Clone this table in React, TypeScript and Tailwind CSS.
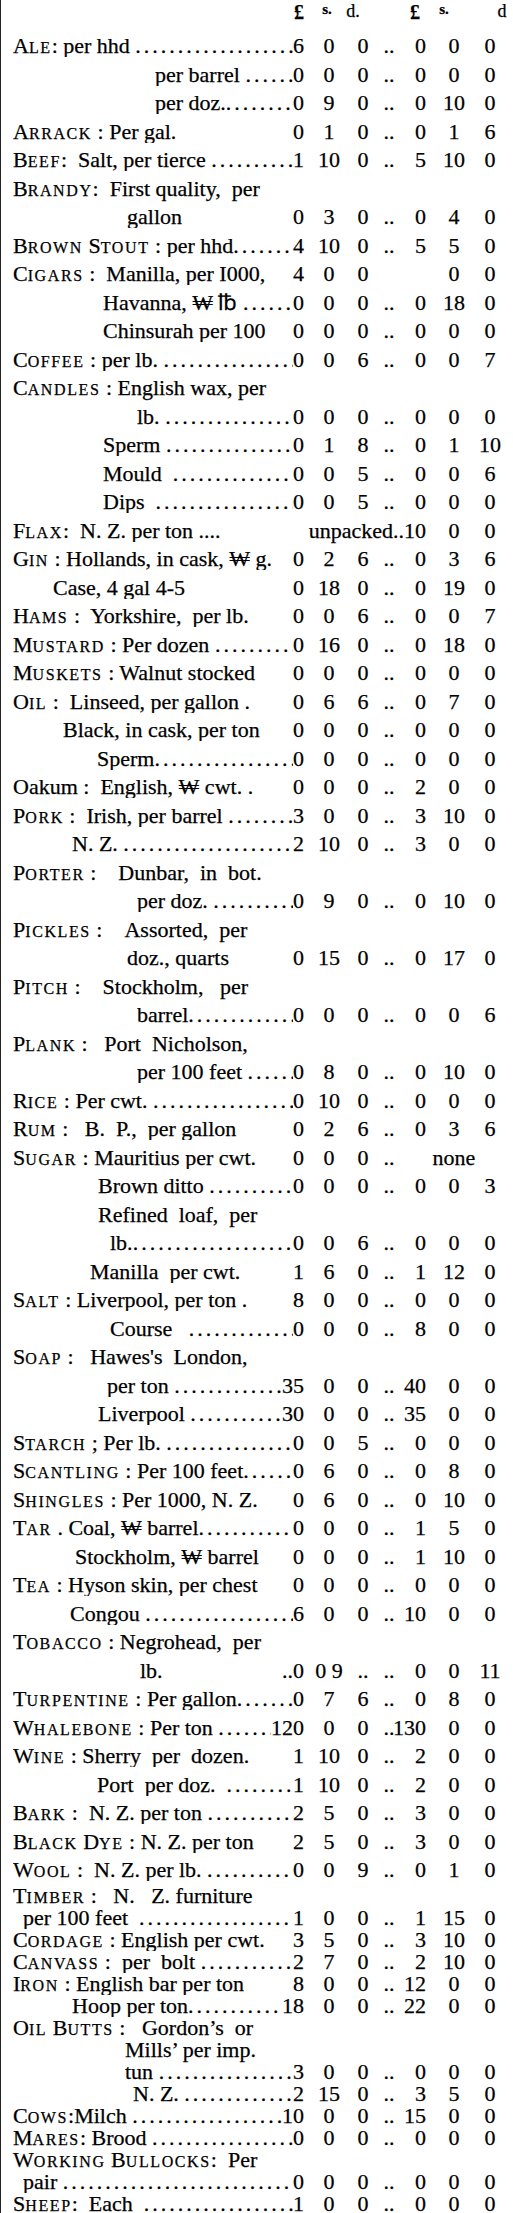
import React from "react";

type V = [string, string, string, string, string, string];
type R = {
  h?: string;
  sep?: string;
  t?: string;
  pl?: string;
  lead?: boolean;
  v?: V;
  wide?: string;
  wv?: [string, string];
};

const Z: V = ["0", "0", "0", "0", "0", "0"];
const DOTS = ".".repeat(70);

const rows: R[] = [
  { h: "Ale", sep: ": ", t: "per hhd ", lead: true, v: ["6", "0", "0", "0", "0", "0"] },
  { t: "per barrel ", pl: "pl-[154px]", lead: true, v: Z },
  { t: "per doz.", pl: "pl-[154px]", lead: true, v: ["0", "9", "0", "0", "10", "0"] },
  { h: "Arrack", sep: " : ", t: "Per gal.", v: ["0", "1", "0", "0", "1", "6"] },
  { h: "Beef", sep: ":  ", t: "Salt, per tierce ", lead: true, v: ["1", "10", "0", "5", "10", "0"] },
  { h: "Brandy", sep: ":  ", t: "First quality,  per" },
  { t: "gallon", pl: "pl-[126px]", v: ["0", "3", "0", "0", "4", "0"] },
  { h: "Brown Stout", sep: " : ", t: "per hhd", lead: true, v: ["4", "10", "0", "5", "5", "0"] },
  { h: "Cigars", sep: " :  ", t: "Manilla, per I000,", v: ["4", "0", "0", "", "0", "0"] },
  { t: "Havanna, ₩ ℔ ", pl: "pl-[102px]", lead: true, v: ["0", "0", "0", "0", "18", "0"] },
  { t: "Chinsurah per 100", pl: "pl-[102px]", v: Z },
  { h: "Coffee", sep: " : ", t: "per lb. ", lead: true, v: ["0", "0", "6", "0", "0", "7"] },
  { h: "Candles", sep: " : ", t: "English wax, per" },
  { t: "lb. ", pl: "pl-[136px]", lead: true, v: Z },
  { t: "Sperm ", pl: "pl-[102px]", lead: true, v: ["0", "1", "8", "0", "1", "10"] },
  { t: "Mould  ", pl: "pl-[102px]", lead: true, v: ["0", "0", "5", "0", "0", "6"] },
  { t: "Dips  ", pl: "pl-[102px]", lead: true, v: ["0", "0", "5", "0", "0", "0"] },
  { h: "Flax", sep: ":  ", t: "N. Z. per ton .... ", wide: "unpacked..10", wv: ["0", "0"] },
  { h: "Gin", sep: " : ", t: "Hollands, in cask, ₩ g.", v: ["0", "2", "6", "0", "3", "6"] },
  { t: "Case, 4 gal 4-5", pl: "pl-[52px]", v: ["0", "18", "0", "0", "19", "0"] },
  { h: "Hams", sep: " :  ", t: "Yorkshire,  per lb.", v: ["0", "0", "6", "0", "0", "7"] },
  { h: "Mustard", sep: " : ", t: "Per dozen ", lead: true, v: ["0", "16", "0", "0", "18", "0"] },
  { h: "Muskets", sep: " : ", t: "Walnut stocked", v: Z },
  { h: "Oil", sep: " :  ", t: "Linseed, per gallon .", v: ["0", "6", "6", "0", "7", "0"] },
  { t: "Black, in cask, per ton", pl: "pl-[62px]", v: Z },
  { t: "Sperm", pl: "pl-[96px]", lead: true, v: Z },
  { t: "Oakum :  English, ₩ cwt. .", v: ["0", "0", "0", "2", "0", "0"] },
  { h: "Pork", sep: " :  ", t: "Irish, per barrel ", lead: true, v: ["3", "0", "0", "3", "10", "0"] },
  { t: "N. Z. ", pl: "pl-[71px]", lead: true, v: ["2", "10", "0", "3", "0", "0"] },
  { h: "Porter", sep: " :    ", t: "Dunbar,  in  bot." },
  { t: "per doz. ", pl: "pl-[136px]", lead: true, v: ["0", "9", "0", "0", "10", "0"] },
  { h: "Pickles", sep: " :    ", t: "Assorted,  per" },
  { t: "doz., quarts", pl: "pl-[126px]", v: ["0", "15", "0", "0", "17", "0"] },
  { h: "Pitch", sep: " :    ", t: "Stockholm,   per" },
  { t: "barrel", pl: "pl-[136px]", lead: true, v: ["0", "0", "0", "0", "0", "6"] },
  { h: "Plank", sep: " :   ", t: "Port  Nicholson," },
  { t: "per 100 feet ", pl: "pl-[136px]", lead: true, v: ["0", "8", "0", "0", "10", "0"] },
  { h: "Rice", sep: " : ", t: "Per cwt. ", lead: true, v: ["0", "10", "0", "0", "0", "0"] },
  { h: "Rum", sep: " :   ", t: "B.  P.,  per gallon", v: ["0", "2", "6", "0", "3", "6"] },
  { h: "Sugar", sep: " : ", t: "Mauritius per cwt.", v: ["0", "0", "0", "", "none", ""] },
  { t: "Brown ditto ", pl: "pl-[97px]", lead: true, v: ["0", "0", "0", "0", "0", "3"] },
  { t: "Refined  loaf,  per", pl: "pl-[97px]" },
  { t: "lb.", pl: "pl-[109px]", lead: true, v: ["0", "0", "6", "0", "0", "0"] },
  { t: "Manilla  per cwt.", pl: "pl-[89px]", v: ["1", "6", "0", "1", "12", "0"] },
  { h: "Salt", sep: " : ", t: "Liverpool, per ton .", v: ["8", "0", "0", "0", "0", "0"] },
  { t: "Course   ", pl: "pl-[109px]", lead: true, v: ["0", "0", "0", "8", "0", "0"] },
  { h: "Soap", sep: " :   ", t: "Hawes's  London," },
  { t: "per ton ", pl: "pl-[106px]", lead: true, v: ["35", "0", "0", "40", "0", "0"] },
  { t: "Liverpool ", pl: "pl-[97px]", lead: true, v: ["30", "0", "0", "35", "0", "0"] },
  { h: "Starch", sep: " ; ", t: "Per lb. ", lead: true, v: ["0", "0", "5", "0", "0", "0"] },
  { h: "Scantling", sep: " : ", t: "Per 100 feet", lead: true, v: ["0", "6", "0", "0", "8", "0"] },
  { h: "Shingles", sep: " : ", t: "Per 1000, N. Z.", v: ["0", "6", "0", "0", "10", "0"] },
  { h: "Tar", sep: " . ", t: "Coal, ₩ barrel", lead: true, v: ["0", "0", "0", "1", "5", "0"] },
  { t: "Stockholm, ₩ barrel", pl: "pl-[74px]", v: ["0", "0", "0", "1", "10", "0"] },
  { h: "Tea", sep: " : ", t: "Hyson skin, per chest", v: Z },
  { t: "Congou ", pl: "pl-[69px]", lead: true, v: ["6", "0", "0", "10", "0", "0"] },
  { h: "Tobacco", sep: " : ", t: "Negrohead,  per" },
  { t: "lb.", pl: "pl-[139px]", v: ["..0", "0 9", "..", "0", "0", "11"] },
  { h: "Turpentine", sep: " : ", t: "Per gallon", lead: true, v: ["0", "7", "6", "0", "8", "0"] },
  { h: "Whalebone", sep: " : ", t: "Per ton ", lead: true, v: ["120", "0", "0", "130", "0", "0"] },
  { h: "Wine", sep: " : ", t: "Sherry  per  dozen.", v: ["1", "10", "0", "2", "0", "0"] },
  { t: "Port  per doz.  ", pl: "pl-[96px]", lead: true, v: ["1", "10", "0", "2", "0", "0"] },
  { h: "Bark", sep: " :  ", t: "N. Z. per ton ", lead: true, v: ["2", "5", "0", "3", "0", "0"] },
  { h: "Black Dye", sep: " : ", t: "N. Z. per ton", v: ["2", "5", "0", "3", "0", "0"] },
  { h: "Wool", sep: " :  ", t: "N. Z. per lb. ", lead: true, v: ["0", "0", "9", "0", "1", "0"] },
  { h: "Timber", sep: " :   ", t: "N.   Z. furniture" },
  { t: "per 100 feet  ", pl: "pl-[22px]", lead: true, v: ["1", "0", "0", "1", "15", "0"] },
  { h: "Cordage", sep: " : ", t: "English per cwt.", v: ["3", "5", "0", "3", "10", "0"] },
  { h: "Canvass", sep: " :  ", t: "per  bolt ", lead: true, v: ["2", "7", "0", "2", "10", "0"] },
  { h: "Iron", sep: " : ", t: "English bar per ton", v: ["8", "0", "0", "12", "0", "0"] },
  { t: "Hoop per ton", pl: "pl-[71px]", lead: true, v: ["18", "0", "0", "22", "0", "0"] },
  { h: "Oil Butts", sep: " :   ", t: "Gordon’s  or" },
  { t: "Mills’ per imp.", pl: "pl-[124px]" },
  { t: "tun ", pl: "pl-[124px]", lead: true, v: ["3", "0", "0", "0", "0", "0"] },
  { t: "N. Z. ", pl: "pl-[132px]", lead: true, v: ["2", "15", "0", "3", "5", "0"] },
  { h: "Cows", sep: ":", t: "Milch ", lead: true, v: ["10", "0", "0", "15", "0", "0"] },
  { h: "Mares", sep: ": ", t: "Brood ", lead: true, v: Z },
  { h: "Working Bullocks", sep: ":  ", t: "Per" },
  { t: "pair ", pl: "pl-[22px]", lead: true, v: Z },
  { h: "Sheep", sep: ":  ", t: "Each  ", lead: true, v: ["1", "0", "0", "0", "0", "0"] },
];

function Head({ s }: { s: string }) {
  return (
    <span>
      {s.split(" ").map((w, i) => (
        <React.Fragment key={i}>
          {i > 0 && " "}
          <span className="text-[22px]">{w[0]}</span>
          <span className="text-[16px] tracking-[0.1em]">{w.slice(1).toUpperCase()}</span>
        </React.Fragment>
      ))}
    </span>
  );
}

function Label({ r }: { r: R }) {
  return (
    <>
      {r.h && <Head s={r.h} />}
      <span className="whitespace-pre">{r.sep}</span>
      <span className="whitespace-pre">{r.t}</span>
      {r.lead && <span className="tracking-[3px]">{DOTS}</span>}
    </>
  );
}

function Row({ r, tall }: { r: R; tall: boolean }) {
  const hc = tall ? "h-[28.5px]" : "h-[22px]";
  const pl = r.pl ?? "pl-[12px]";
  if (!r.v && !r.wide) {
    return (
      <div className={`flex items-center ${hc} ${pl} whitespace-nowrap`}>
        <Label r={r} />
      </div>
    );
  }
  if (r.wide && r.wv) {
    return (
      <div className={`flex items-center ${hc}`}>
        <div className={`flex flex-1 min-w-0 items-center ${pl}`}>
          <div className="flex-1 min-w-0 overflow-hidden whitespace-nowrap">
            <Label r={r} />
          </div>
          <span className="shrink-0 whitespace-nowrap">{r.wide}</span>
        </div>
        <div className="w-[56px] shrink-0 flex justify-center">{r.wv[0]}</div>
        <div className="w-[16px] shrink-0 flex justify-center">{r.wv[1]}</div>
        <div className="w-[15px] shrink-0" />
      </div>
    );
  }
  const v = r.v as V;
  return (
    <div className={`flex items-center ${hc}`}>
      <div className={`flex flex-1 min-w-0 items-center ${pl}`}>
        <div className="flex-1 min-w-0 overflow-hidden whitespace-nowrap pr-[8px]">
          <Label r={r} />
        </div>
        <span className="shrink-0 whitespace-nowrap">{v[0]}</span>
      </div>
      <div className="w-[50px] shrink-0 flex justify-center whitespace-nowrap">{v[1]}</div>
      <div className="w-[18px] shrink-0 flex justify-center whitespace-nowrap">{v[2]}</div>
      <div className="w-[34px] shrink-0 flex justify-center">{v[3] !== "" || v[4] === "none" ? ".." : ""}</div>
      <div className="w-[20px] shrink-0 flex justify-end whitespace-nowrap">{v[4] === "none" ? "" : v[3]}</div>
      <div className="w-[56px] shrink-0 flex justify-center whitespace-nowrap">{v[4]}</div>
      <div className="w-[16px] shrink-0 flex justify-center whitespace-nowrap">{v[5]}</div>
      <div className="w-[15px] shrink-0" />
    </div>
  );
}

export default function App() {
  return (
    <div
      className="w-full min-h-[2213px] bg-white text-black border-l border-[#222] text-[22px] leading-none overflow-hidden [-webkit-text-stroke:0.25px_#000]"
      style={{ fontFamily: '"Liberation Serif", "DejaVu Serif", serif' }}
    >
      <div className="flex items-start h-[32px] pt-[2px]">
        <div className="flex-1 flex justify-end">
          <span className="text-[20px] font-bold">£</span>
        </div>
        <div className="w-[50px] shrink-0 flex justify-center">
          <span className="text-[15px] font-bold mr-[4px]">s.</span>
        </div>
        <div className="w-[18px] shrink-0 flex justify-center">
          <span className="text-[18px] mr-[20px]">d.</span>
        </div>
        <div className="w-[34px] shrink-0" />
        <div className="w-[20px] shrink-0 flex justify-end">
          <span className="text-[20px] font-bold mr-[6px]">£</span>
        </div>
        <div className="w-[56px] shrink-0 flex justify-center">
          <span className="text-[15px] font-bold mr-[20px]">s.</span>
        </div>
        <div className="w-[16px] shrink-0 flex justify-center">
          <span className="text-[18px] ml-[24px]">d</span>
        </div>
        <div className="w-[15px] shrink-0" />
      </div>
      {rows.map((r, i) => (
        <Row key={i} r={r} tall={i < 65} />
      ))}
    </div>
  );
}
